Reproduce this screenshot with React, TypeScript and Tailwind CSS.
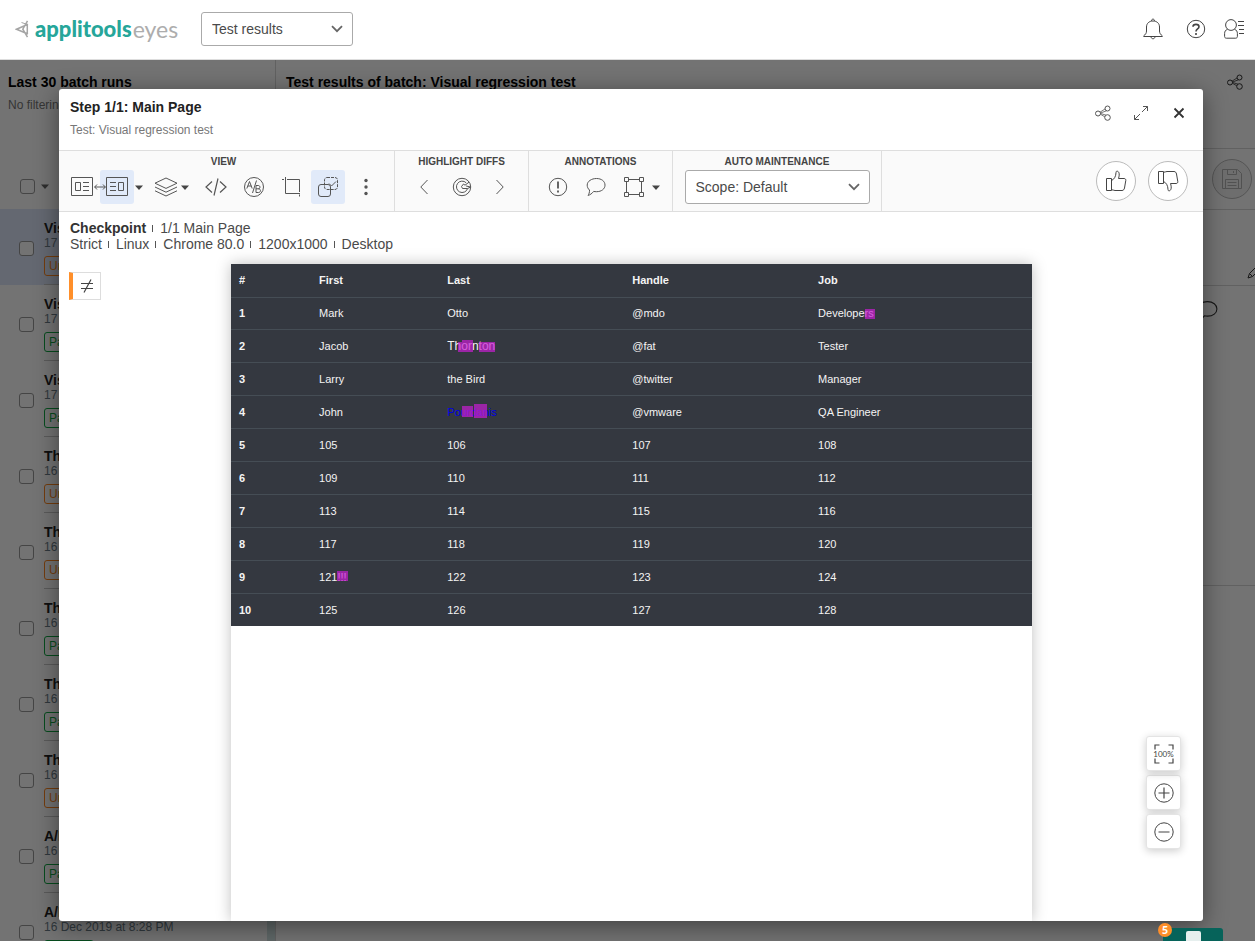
import React from "react";

type IconProps = { size?: number; className?: string; children: React.ReactNode; viewBox?: string; width?: number };

function Svg({ size = 22, width, className = "", viewBox, children }: IconProps) {
  const w = width ?? size;
  return (
    <svg
      width={w}
      height={size}
      viewBox={viewBox ?? `0 0 ${w} ${size}`}
      fill="none"
      stroke="currentColor"
      strokeWidth="1"
      className={`shrink-0 ${className}`}
      aria-hidden="true"
    >
      {children}
    </svg>
  );
}

const ShareIcon = () => (
  <Svg size={16}>
    <circle cx="3" cy="8.500" r="2.500" />
    <circle cx="12.500" cy="3.500" r="2.500" />
    <circle cx="12.500" cy="12.500" r="2.800" />
    <path d="M5 7.200 10.300 3.800M5.500 8 11.500 5.800M5.400 9.200 9.800 11.800M5.400 8.400 11 10.200" strokeWidth=".8" />
  </Svg>
);

const Caret = () => (
  <svg width="8" height="5" viewBox="0 0 8 5" aria-hidden="true" className="shrink-0 fill-current">
    <path d="M0 .5h8L4 5z" />
  </svg>
);

const Chevron = ({ className = "" }: { className?: string }) => (
  <svg width="12" height="8" viewBox="0 0 12 8" fill="none" stroke="currentColor" strokeWidth="1.8" className={className} aria-hidden="true">
    <path d="M1 1.200 6 6.200 11 1.200" />
  </svg>
);

const BubbleIcon = ({ size = 20 }: { size?: number }) => (
  <Svg size={size} viewBox="0 0 20 20">
    <path d="M10.500 1.500c5 0 8.500 2.800 8.500 6.600s-3.500 6.600-8.500 6.600c-1 0-2-.1-2.800-.3C6 16.500 4 18 2 18.400c1-1.200 1.600-3 1.500-5.400C2 11.800 1.200 10 1.200 8.100c0-3.800 4.300-6.600 9.300-6.600z" />
  </Svg>
);

const ThumbIcon = ({ down = false }: { down?: boolean }) => (
  <Svg size={22} className={down ? "-scale-y-100" : ""}>
    <path d="M1.500 8.500h5v12h-5zM6.500 10.500c2.500-1 4.500-4 4.500-8 0-1 .6-1.500 1.400-1.300 1.300.4 2 2 1.800 4-.1 1.200-.4 2.300-.7 3.300h5.500c1.300 0 1.900.8 1.800 1.900l-1.300 7.600c-.3 1.400-1 2.500-2.500 2.500H10c-1.500 0-2-.8-3.500-.8" />
  </Svg>
);

function ToolButton({ label, active = false, children }: { label: string; active?: boolean; children: React.ReactNode }) {
  return (
    <button
      type="button"
      aria-label={label}
      className={`relative flex size-[34px] shrink-0 items-center justify-center rounded-[3px] text-[#555] ${active ? "bg-[#e1eaf9]" : ""}`}
    >
      {children}
    </button>
  );
}

function CaretButton({ label, className = "w-2.5" }: { label: string; className?: string }) {
  return (
    <button type="button" aria-label={label} className={`flex h-[34px] shrink-0 items-center justify-center ${className}`}>
      <Caret />
    </button>
  );
}

function Section({ title, className = "", children }: { title: string; className?: string; children: React.ReactNode }) {
  return (
    <section className={`flex shrink-0 flex-col border-r border-[#dedede] pt-1 ${className}`}>
      <h3 className="text-center text-[10px] leading-[14px] font-bold text-[#444]">{title}</h3>
      <div className="mt-px flex justify-center">{children}</div>
    </section>
  );
}

function Picker({ label, value, className }: { label: string; value: string; className: string }) {
  return (
    <div className={`relative flex items-center ${className}`}>
      <select
        aria-label={label}
        className="h-[34px] w-full appearance-none rounded-[3px] border border-[#aaa] bg-white pr-8 pl-2.5 text-sm text-[#4a4a4a]"
      >
        <option>{value}</option>
      </select>
      <Chevron className="pointer-events-none absolute right-2.5 text-[#666]" />
    </div>
  );
}

const runs = [
  { name: "Visual regression test", date: "17 Dec 2019 at 9:12 AM", status: "Unresolved" },
  { name: "Visual regression test", date: "17 Dec 2019 at 9:05 AM", status: "Passed" },
  { name: "Visual regression test", date: "17 Dec 2019 at 8:51 AM", status: "Passed" },
  { name: "The demo batch", date: "16 Dec 2019 at 9:47 PM", status: "Unresolved" },
  { name: "The demo batch", date: "16 Dec 2019 at 9:30 PM", status: "Unresolved" },
  { name: "The demo batch", date: "16 Dec 2019 at 9:22 PM", status: "Passed" },
  { name: "The demo batch", date: "16 Dec 2019 at 9:10 PM", status: "Passed" },
  { name: "The demo batch", date: "16 Dec 2019 at 8:56 PM", status: "Unresolved" },
  { name: "A/B testing", date: "16 Dec 2019 at 8:40 PM", status: "Passed" },
  { name: "A/B testing", date: "16 Dec 2019 at 8:28 PM", status: "Passed" },
];

const checkbox = "size-[15px] shrink-0 appearance-none rounded-[3px] border border-[#999] bg-white";

function BatchList() {
  return (
    <aside className="flex w-[276px] shrink-0 flex-col overflow-hidden border-r border-[#d8d8d8]">
      <div className="h-[149px] shrink-0 px-2 pt-3.5">
        <h2 className="text-sm leading-4 font-bold whitespace-nowrap text-black">Last 30 batch runs</h2>
        <p className="mt-[7px] text-xs leading-4 text-[#777]">No filtering applied</p>
        <div className="mt-[66px] flex items-center gap-1.5 pl-3 text-[#666]">
          <input type="checkbox" aria-label="Select all batches" className={checkbox} />
          <Caret />
        </div>
      </div>
      <ul className="min-h-0 flex-1 overflow-hidden">
        {runs.map((run, i) => (
          <li key={i} className={`flex h-[76px] gap-2.5 pl-[19px] ${i === 0 ? "bg-[#dde7fb]" : ""}`}>
            <input type="checkbox" aria-label={`Select ${run.name}, ${run.date}`} className={`${checkbox} mt-8`} />
            <div className="flex h-full flex-1 flex-col items-start border-b border-[#c8c8c8] pt-[11px]">
              <p className="text-sm leading-4 font-bold text-[#222]">{run.name}</p>
              <p className="text-xs leading-[14px] text-[#6b7c88]">{run.date}</p>
              <span
                className={`mt-1.5 rounded-[3px] border px-1 text-xs leading-[18px] ${
                  run.status === "Passed" ? "border-[#10a844] text-[#10a844]" : "border-[#ff8820] text-[#ff8820]"
                }`}
              >
                {run.status}
              </span>
            </div>
            <span className="h-full w-2 bg-[#d3e4e4]" />
          </li>
        ))}
      </ul>
    </aside>
  );
}

function BatchDetails() {
  return (
    <div className="flex min-w-0 flex-1 flex-col text-[#333]">
      <div className="flex h-[89px] items-start justify-between border-b border-[#d8d8d8] pt-3.5 pr-3 pl-2.5">
        <h2 className="text-sm leading-4 font-bold text-black">Test results of batch: Visual regression test</h2>
        <ShareIcon />
      </div>
      <div className="flex h-[61px] items-center justify-end border-b border-[#d8d8d8] pr-[3px]">
        <button type="button" aria-label="Save" className="flex size-10 items-center justify-center rounded-full border border-[#bbb] bg-[#f4f4f4] text-[#b4b4b4]">
          <Svg size={20}>
            <path d="M.5.500h15l4 4v15H.5zM5.500.500v5h9v-5M11.500 2v2M3.500 19.500v-9h13v9M5.500 13.500h9M5.500 16.500h9" />
          </Svg>
        </button>
      </div>
      <div className="flex h-[76px] items-end justify-end overflow-hidden border-b border-[#d8d8d8] pb-1.5">
        <Svg size={16} className="-mr-2">
          <path d="m1 15 1.500-4.500L11 2l3 3-8.500 8.500zM2.500 10.500l3 3M9.500 3.500l3 3" />
        </Svg>
      </div>
      <div className="flex h-[300px] items-start justify-end border-b border-[#d8d8d8] pt-3.5 pr-[37px]">
        <BubbleIcon size={22} />
      </div>
    </div>
  );
}

function Header() {
  return (
    <header className="flex h-[60px] shrink-0 items-center border-b border-[#ddd] bg-white pr-[11px] pb-0.5 pl-[15px] text-[#444]">
      <a href="#" className="flex w-[186px] items-center whitespace-nowrap">
        <Svg size={18} width={14} className="mr-1.5 text-[#a5a5a5]">
          <path strokeWidth="1.500" d="M13 4.200 1.500 9.200 13 14M12.500 .8 7.800 9.200l4.700 8M12.300 4.500v9.500" />
          <path d="M6.500 2.500 12.500 4.500" />
        </Svg>
        <span className="font-[Lato] text-[22px] leading-8 font-black text-[#26a69a]">applitools</span>
        <span className="ml-px font-[Lato] text-[23px] leading-8 font-normal text-[#adadad]">eyes</span>
      </a>
      <Picker label="Page" value="Test results" className="w-[152px]" />
      <nav className="ml-auto flex items-center gap-[18px]">
        <button type="button" aria-label="Notifications" className="mr-1">
          <Svg size={22} width={22}>
            <path d="M1.500 18.500h19M1.500 18c2-1.500 3-2.800 3-5V9c0-3.500 2.500-6 6.500-6s6.500 2.500 6.500 6v4c0 2.200 1 3.500 3 5M9 18.500c0 3 4 3 4 0M9.500 3c-.2-2.500 3.200-2.500 3 0" />
          </Svg>
        </button>
        <button type="button" aria-label="Help">
          <Svg size={20}>
            <circle cx="10" cy="10" r="8.700" />
            <path strokeWidth="1.600" d="M7 7.800C7 4.500 13 4.500 13 7.800c0 2.200-3 2.200-3 4.700M10 14v2" />
          </Svg>
        </button>
        <button type="button" aria-label="Account">
          <Svg size={20}>
            <circle cx="7" cy="6" r="5.400" />
            <path d="M3.500 10.300C1.500 11 .6 12.500.6 14.500v3c0 1 .7 1.700 1.700 1.700h9.400c1 0 1.700-.7 1.700-1.700v-3c0-2-.9-3.500-2.900-4.200M14 2.500h6M14 6.500h6M15 10.500h5M15 14.500h5" />
          </Svg>
        </button>
      </nav>
    </header>
  );
}

function Toolbar() {
  return (
    <div className="flex h-[61px] shrink-0 border-b border-[#dedede] bg-[#fafafa] text-[#444]">
      <Section title="VIEW" className="w-[336px] pr-1.5">
        <ToolButton label="Show baseline">
          <Svg size={20} width={22}>
            <path d="M.5.500h21v18H.5zM4.500 5.500h5v8h-5zM12 5.500h6M12 9.500h6M12 13.500h6" />
          </Svg>
        </ToolButton>
        <div className="mr-[5px] ml-px flex">
          <ToolButton label="Show checkpoint" active>
            <Svg size={20} width={22}>
              <path d="M.5.500h21v18H.5zM12.500 5.500h5v8h-5zM4 5.500h6M4 9.500h6M4 13.500h6" />
            </Svg>
            <Svg size={8} width={12} className="absolute -left-1.5">
              <path d="M.5 4h11M3 1.500.7 4 3 6.500M9 1.500 11.300 4 9 6.500" />
            </Svg>
          </ToolButton>
          <CaretButton label="View options" />
        </div>
        <ToolButton label="Layers">
          <Svg size={20} width={24}>
            <path d="M12 1 23 6.200 12 11.400 1 6.200zM1 10l11 5.200L23 10M1 13.800 12 19l11-5.200" />
          </Svg>
        </ToolButton>
        <CaretButton label="Layer options" className="mr-3 w-1" />
        <div className="flex gap-1">
          <ToolButton label="Source">
            <Svg size={20} width={22}>
              <path strokeWidth="1.200" d="M7 4.500 1 10l6 5.500M15 4.500 21 10l-6 5.500M13 1.500l-4 17" />
            </Svg>
          </ToolButton>
          <ToolButton label="A/B variations">
            <Svg size={20}>
              <circle cx="10" cy="10" r="9.500" />
              <path d="M2.800 11.500 5.500 4.500 8.200 11.500M3.800 9h3.500M12.500 3.500 8.500 16M12 8.500v7h2.600c2.500 0 2.500-3.700 0-3.700H12M12 8.500h2.300c2.200 0 2.200 3.300 0 3.300" />
            </Svg>
          </ToolButton>
          <ToolButton label="Crop">
            <Svg size={20}>
              <path d="M3.500 0v16.500H18M0 2.500h2M5 2.500h12.500V15M17.500 17.500v2" />
            </Svg>
          </ToolButton>
        </div>
        <div className="ml-0.5 flex gap-1">
          <ToolButton label="Highlight differences" active>
            <Svg size={20}>
              <rect x=".5" y="7.500" width="12" height="12" rx="2.500" />
              <rect x="6.500" y=".5" width="13" height="12" rx="2.500" strokeDasharray="3 1" />
              <path d="m11 6.500 2.500 2.500L18 4.500" />
            </Svg>
          </ToolButton>
          <ToolButton label="More">
            <Svg size={20} width={4} className="fill-current stroke-none">
              <circle cx="2" cy="3.500" r="1.700" />
              <circle cx="2" cy="10" r="1.700" />
              <circle cx="2" cy="16.500" r="1.700" />
            </Svg>
          </ToolButton>
        </div>
      </Section>
      <Section title="HIGHLIGHT DIFFS" className="w-[134px]">
        <div className="flex gap-1">
          <ToolButton label="Previous difference">
            <Svg size={16} width={8}>
              <path d="M7.500 1 .8 8l6.700 7" />
            </Svg>
          </ToolButton>
          <ToolButton label="Highlight difference">
            <Svg size={20}>
              <circle cx="10" cy="10" r="8.700" />
              <path d="M14.200 5.800A5.700 5.700 0 1 0 15.600 11.500M15.600 11.500H10.500L9.500 9.500l2-2.500 1.500 1.200 4-3M15.600 11.500l3-1.500-4.500-1" />
            </Svg>
          </ToolButton>
          <ToolButton label="Next difference">
            <Svg size={16} width={8}>
              <path d="M.5 1 7.200 8 .5 15" />
            </Svg>
          </ToolButton>
        </div>
      </Section>
      <Section title="ANNOTATIONS" className="w-[144px]">
        <div className="flex gap-1">
          <ToolButton label="Add issue">
            <Svg size={20}>
              <circle cx="10" cy="10" r="8.700" />
              <path strokeWidth="1.800" d="M10 4.500v7M10 13.500v2" />
            </Svg>
          </ToolButton>
          <ToolButton label="Add remark">
            <BubbleIcon />
          </ToolButton>
          <ToolButton label="Add region">
            <Svg size={20}>
              <path d="M.5.500h4v4h-4zM15.500.500h4v4h-4zM.5 15.500h4v4h-4zM15.500 15.500h4v4h-4zM2.500 4.500v11M17.500 4.500v11M4.500 2.500h11M4.500 17.500h11" />
            </Svg>
          </ToolButton>
        </div>
        <CaretButton label="Region options" />
      </Section>
      <Section title="AUTO MAINTENANCE" className="w-[209px]">
        <Picker label="Scope" value="Scope: Default" className="w-[185px]" />
      </Section>
      <div className="ml-auto flex items-center gap-3 pr-[15px]">
        {[false, true].map((down) => (
          <button
            key={String(down)}
            type="button"
            aria-label={down ? "Reject" : "Accept"}
            className="flex size-10 items-center justify-center rounded-full border border-[#bbb] bg-white"
          >
            <ThumbIcon down={down} />
          </button>
        ))}
      </div>
    </div>
  );
}

function Details({ items, strong = false }: { items: string[]; strong?: boolean }) {
  return (
    <p className="flex items-center text-sm leading-4 text-[#4a4a4a]">
      {items.map((item, i) => (
        <React.Fragment key={item}>
          {i > 0 && <span className="mr-[7px] ml-1.5 h-[7px] w-px bg-[#555]" />}
          <span className={strong && i === 0 ? "font-bold text-[#333]" : ""}>{item}</span>
        </React.Fragment>
      ))}
    </p>
  );
}

const Diff = ({ className }: { className: string }) => <span className={`absolute bg-[#c81ed2]/70 ${className}`} />;

const rows: React.ReactNode[][] = [
  ["Mark", "Otto", "@mdo", <span className="relative">Developers<Diff className="top-0.5 -right-px h-2.5 w-2.5" /></span>],
  [
    "Jacob",
    <span className="relative text-xs leading-4">
      Thornton
      <Diff className="top-[3px] left-[11px] h-2.5 w-1" />
      <Diff className="top-px left-[15px] h-3 w-[11px]" />
      <Diff className="top-[3px] left-8 h-2.5 w-4" />
    </span>,
    "@fat",
    "Tester",
  ],
  ["Larry", "the Bird", "@twitter", "Manager"],
  [
    "John",
    <span className="relative text-[#0000e6]">
      Pourdanis
      <Diff className="top-0 left-[15px] h-[11px] w-[11px]" />
      <Diff className="-top-0.5 left-[27px] h-3.5 w-[13px]" />
    </span>,
    "@vmware",
    "QA Engineer",
  ],
  ["105", "106", "107", "108"],
  ["109", "110", "111", "112"],
  ["113", "114", "115", "116"],
  ["117", "118", "119", "120"],
  [<span className="relative">121!!!<Diff className="top-0 -right-px h-2.5 w-[11px]" /></span>, "122", "123", "124"],
  ["125", "126", "127", "128"],
];

function Capture() {
  return (
    <div className="bg-white shadow-[0_0_14px_rgba(0,0,0,0.25)]">
      <table className="h-[362px] w-full table-fixed border-collapse bg-[#343840] text-left text-[11px] leading-4 text-[#f4f4f4]">
        <thead>
          <tr className="h-[33px] border-b border-[#454d55]">
            <th className="w-[10%] px-2">#</th>
            <th className="w-[16%] px-2">First</th>
            <th className="w-[23.1%] px-2">Last</th>
            <th className="w-[23.2%] px-2">Handle</th>
            <th className="px-2">Job</th>
          </tr>
        </thead>
        <tbody>
          {rows.map((row, i) => (
            <tr key={i} className="border-b border-[#454d55] last:border-b-0">
              <th scope="row" className="px-2">{i + 1}</th>
              {row.map((cell, j) => (
                <td key={j} className="px-2">{cell}</td>
              ))}
            </tr>
          ))}
        </tbody>
      </table>
    </div>
  );
}

const zoomButton =
  "flex size-[35px] items-center justify-center rounded-[3px] border border-[#e4e4e4] bg-white shadow-[0_2px_8px_rgba(0,0,0,0.2)]";

function StepDialog() {
  return (
    <div
      role="dialog"
      aria-label="Step 1/1: Main Page"
      className="absolute top-[29px] right-[52px] bottom-5 left-[59px] flex flex-col overflow-hidden rounded-[3px] bg-white text-[#444] shadow-[0_5px_24px_rgba(0,0,0,0.45)]"
    >
      <div className="flex h-[62px] shrink-0 justify-between border-b border-[#dedede] pr-[7px] pl-[11px]">
        <div className="pt-2.5">
          <h1 className="text-sm leading-4 font-bold text-[#222]">Step 1/1: Main Page</h1>
          <p className="mt-[7px] text-xs leading-4 text-[#777]">Test: Visual regression test</p>
        </div>
        <div className="flex gap-1 pt-[7px]">
          <ToolButton label="Share">
            <ShareIcon />
          </ToolButton>
          <ToolButton label="Expand">
            <Svg size={16}>
              <path d="M9 7l5.500-5.500M10 1.500h4.500V6M7 9l-5.500 5.500M1.500 10v4.500H6" />
            </Svg>
          </ToolButton>
          <ToolButton label="Close">
            <Svg size={12} className="text-[#333]">
              <path strokeWidth="1.800" d="m1.500 1.500 9 9M10.500 1.500l-9 9" />
            </Svg>
          </ToolButton>
        </div>
      </div>
      <Toolbar />
      <div className="shrink-0 pt-2 pb-3 pl-[11px]">
        <Details strong items={["Checkpoint", "1/1 Main Page"]} />
        <Details items={["Strict", "Linux", "Chrome 80.0", "1200x1000", "Desktop"]} />
      </div>
      <div className="grid min-h-0 flex-1 grid-cols-[172px_1fr_171px]">
        <div className="pt-2 pl-2.5">
          <div className="flex h-7 w-8 items-center justify-center border border-l-4 border-[#ddd] border-l-[#ff8f2a]">
            <Svg size={14}>
              <path strokeWidth="1.200" d="M1 4.500h12M1 9.500h12M11 .5 4 13.500" />
            </Svg>
          </div>
        </div>
        <Capture />
        <div className="flex flex-col items-end justify-end gap-1 pr-[22px] pb-[72px]">
          <button type="button" aria-label="Actual size" className={`${zoomButton} relative`}>
            <Svg size={20} className="absolute">
              <path strokeWidth="1.200" d="M1 5.500V1h4.500M14.500 1H19v4.500M1 14.500V19h4.500M14.500 19H19v-4.500" />
            </Svg>
            <span className="bg-white font-[Lato] text-[8px] leading-3">100%</span>
          </button>
          <button type="button" aria-label="Zoom in" className={zoomButton}>
            <Svg size={20}>
              <circle cx="10" cy="10" r="9.200" />
              <path strokeWidth="1.200" d="M4.500 10h11M10 4.500v11" />
            </Svg>
          </button>
          <button type="button" aria-label="Zoom out" className={zoomButton}>
            <Svg size={20}>
              <circle cx="10" cy="10" r="9.200" />
              <path strokeWidth="1.200" d="M4.500 10h11" />
            </Svg>
          </button>
        </div>
      </div>
    </div>
  );
}

export default function App() {
  return (
    <div className="flex h-screen flex-col overflow-hidden bg-white font-['Liberation_Sans',Arial,sans-serif]">
      <Header />
      <main className="relative flex min-h-0 flex-1 overflow-hidden">
        <BatchList />
        <BatchDetails />
        <div className="absolute inset-0 bg-black/55" />
        <StepDialog />
        <button
          type="button"
          aria-label="Open messages, 5 unread"
          className="absolute right-8 bottom-0 flex h-[13px] w-[60px] items-end justify-center rounded-t-[3px] bg-[#06635a]"
        >
          <span className="h-2.5 w-[15px] rounded-t-[2px] bg-[#e6efee]" />
          <span className="absolute -top-[5px] -left-[5px] flex size-3.5 items-center justify-center rounded-full bg-[#ff8f2a] font-[Lato] text-[11px] leading-3 font-black text-white">
            5
          </span>
        </button>
      </main>
    </div>
  );
}
